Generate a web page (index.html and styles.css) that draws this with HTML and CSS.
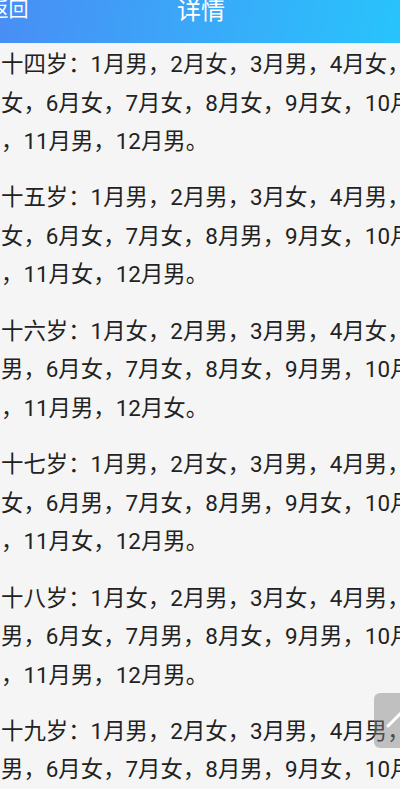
FILE: index.html
```html
<!DOCTYPE html>
<html lang="zh-CN">
<head>
<meta charset="utf-8">
<title>详情</title>
<link rel="stylesheet" href="styles.css">
</head>
<body>
<div class="page">
  <header class="topbar">
    <span class="back">返回</span>
    <h1 class="title">详情</h1>
    <span class="spacer"></span>
  </header>
  <main class="content">
    <p class="entry">二十四岁：1月男，2月女，3月男，4月女，5月女，6月女，7月女，8月女，9月女，10月男，11月男，12月男。</p>
    <p class="entry">二十五岁：1月男，2月男，3月女，4月男，5月女，6月女，7月女，8月男，9月女，10月女，11月女，12月男。</p>
    <p class="entry">二十六岁：1月女，2月男，3月男，4月女，5月男，6月女，7月女，8月女，9月男，10月女，11月男，12月女。</p>
    <p class="entry">二十七岁：1月男，2月女，3月男，4月男，5月女，6月男，7月女，8月男，9月女，10月女，11月女，12月男。</p>
    <p class="entry">二十八岁：1月女，2月男，3月女，4月男，5月男，6月女，7月男，8月女，9月男，10月女，11月男，12月男。</p>
    <p class="entry">二十九岁：1月男，2月女，3月男，4月男，5月男，6月女，7月女，8月男，9月女，10月女，11月男，12月女。</p>
    <p class="entry">三十岁：1月男，2月女，3月女，4月女，5月女，6月女，7月女，8月女，9月女，10月女，11月女，12月女。</p>
  </main>
</div>
<div class="totop">
  <svg class="totop-icon" width="54" height="55" viewBox="0 0 54 55"><polyline points="14,33 27,20 40,33" fill="none" stroke="#ffffff" stroke-width="3" stroke-linecap="round" stroke-linejoin="round"/></svg>
</div>
</body>
</html>
```
FILE: styles.css
```css
html, body {
  margin: 0;
  padding: 0;
}
body {
  width: 400px;
  height: 789px;
  overflow: hidden;
  background: #f5f5f5;
  font-family: Roboto, "Noto Sans CJK SC", sans-serif;
  color: #222222;
  text-spacing-trim: space-all;
}
.page {
  width: 445px;
  margin-left: -21.4px;
}
.topbar {
  display: grid;
  grid-template-columns: 1fr auto 1fr;
  align-items: start;
  height: 43px;
  background: linear-gradient(100deg, #4a8bf5 0%, #3aa9f8 50%, #25c7fd 100%);
  border-bottom: 1.3px solid #e9f1fb;
  color: #ffffff;
}
.back {
  justify-self: start;
  margin-left: 10px;
  font-size: 20px;
  line-height: 21px;
}
.title {
  margin: 0;
  font-size: 24px;
  font-weight: normal;
  line-height: 22px;
}
.content {
  padding-top: 1px;
}
.entry {
  margin: 0 0 17.9px 0;
  font-size: 22.4px;
  line-height: 38.5px;
}
.totop {
  position: fixed;
  left: 374px;
  top: 693px;
  width: 54px;
  height: 55px;
  border-radius: 6px;
  background: rgba(128, 128, 128, 0.45);
}
.totop-icon {
  display: block;
}
```
